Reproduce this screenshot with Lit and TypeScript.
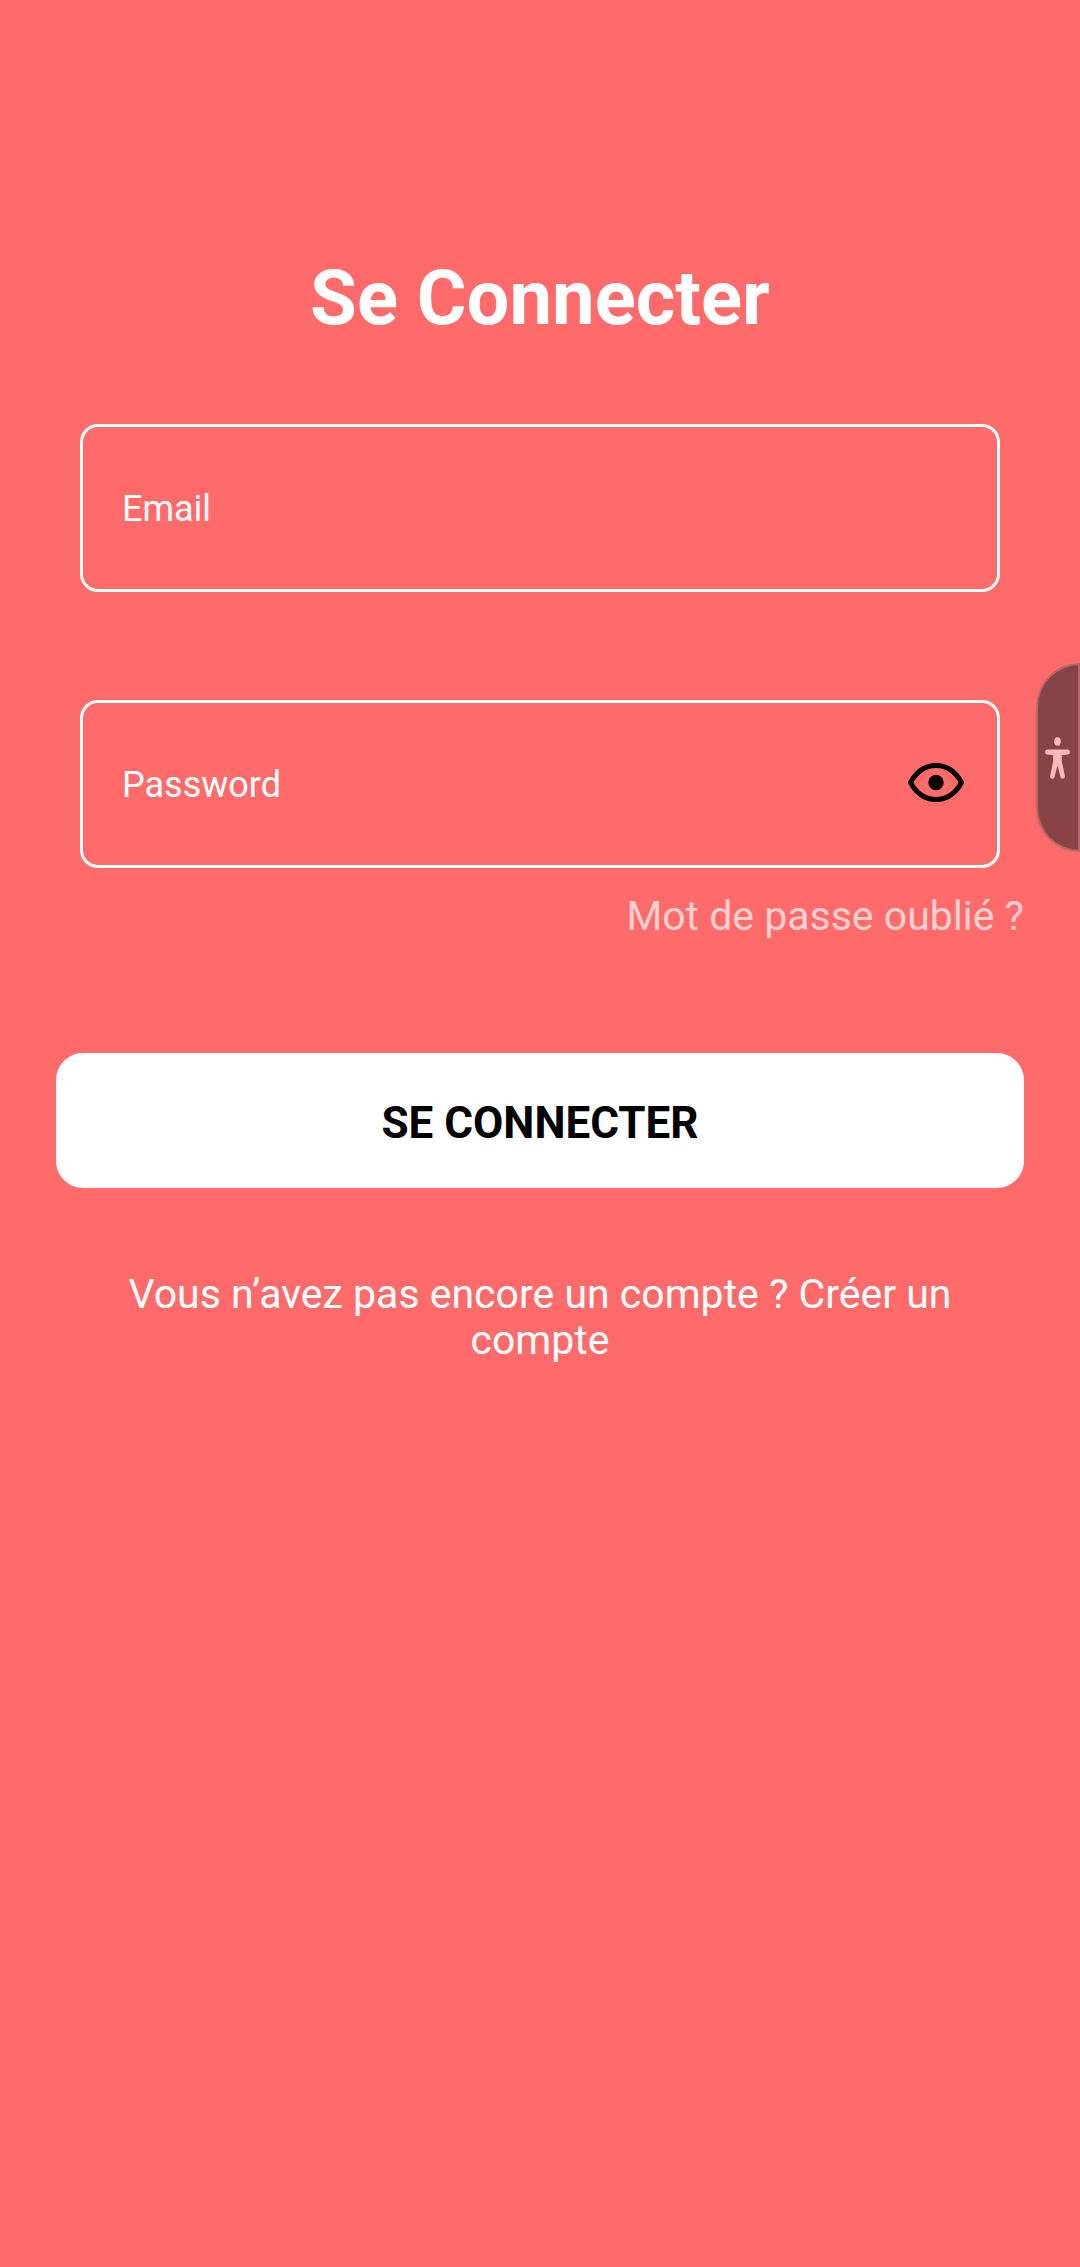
import { LitElement, html, css } from "lit";
import { customElement, state } from "lit/decorators.js";

@customElement("app-root")
export class AppRoot extends LitElement {
  @state() private revealed = false;

  static styles = css`
    :host {
      display: block;
      min-height: 100vh;
      background: #ff6b6b;
      color: #fff;
      font-family: Roboto, "Liberation Sans", sans-serif;
    }
    * {
      box-sizing: border-box;
    }
    .page {
      display: flex;
      flex-direction: column;
      padding: 252px 56px 56px;
    }
    .title {
      margin: 0 0 80px;
      font-size: 76px;
      line-height: 92px;
      font-weight: 700;
      text-align: center;
    }
    .form {
      display: flex;
      flex-direction: column;
    }
    .fields {
      display: flex;
      flex-direction: column;
      gap: 108px;
      padding: 0 24px;
    }
    .field {
      display: flex;
      align-items: center;
      height: 168px;
      padding: 0 32px 0 39px;
      border: 3px solid #fff;
      border-radius: 18px;
    }
    .input {
      flex: 1;
      min-width: 0;
      height: 100%;
      padding: 2px 0 0;
      border: 0;
      outline: 0;
      background: none;
      color: #fff;
      font-family: inherit;
      font-size: 36px;
    }
    .input::placeholder {
      color: #fff;
      opacity: 1;
    }
    .reveal {
      display: flex;
      padding: 0;
      border: 0;
      background: none;
      color: #000;
      cursor: pointer;
    }
    .eye {
      display: block;
      width: 58px;
      height: 44px;
    }
    .forgot {
      align-self: flex-end;
      margin-top: 25px;
      font-size: 41px;
      line-height: 46px;
      color: #ffd0d0;
      text-decoration: none;
    }
    .submit {
      margin-top: 114px;
      padding: 44px 24px 39px;
      border: 0;
      border-radius: 27px;
      background: #fff;
      color: #000;
      font-family: inherit;
      font-size: 44px;
      line-height: 52px;
      font-weight: 700;
      text-transform: uppercase;
      cursor: pointer;
    }
    .signup {
      display: block;
      margin-top: 83px;
      padding: 0 24px;
      color: inherit;
      font-size: 41px;
      line-height: 46px;
      text-align: center;
      text-decoration: none;
    }
    .assist {
      position: absolute;
      top: 663px;
      right: 0;
      display: flex;
      align-items: center;
      justify-content: center;
      width: 44px;
      height: 189px;
      padding: 0;
      border: 2px solid #b96668;
      border-radius: 44px 0 0 44px;
      background: #874446;
      color: #ffb9b9;
      cursor: pointer;
    }
    .person {
      display: block;
      width: 26px;
      height: 42px;
    }
  `;

  render() {
    return html`
      <main class="page">
        <h1 class="title">Se Connecter</h1>
        <form class="form" @submit=${(e: Event) => e.preventDefault()}>
          <div class="fields">
            <div class="field">
              <input class="input" type="email" aria-label="Email" placeholder="Email" />
            </div>
            <div class="field">
              <input
                class="input"
                type=${this.revealed ? "text" : "password"}
                aria-label="Password"
                placeholder="Password"
              />
              <button
                class="reveal"
                type="button"
                aria-label="Password"
                aria-pressed=${this.revealed ? "true" : "false"}
                @click=${() => (this.revealed = !this.revealed)}
              >
                <svg class="eye" viewBox="0 0 58 44" aria-hidden="true">
                  <path
                    d="M3.500 20.500C9 10.500 18 3.500 29 3.500s20 7 25.500 17C49 30.500 40 37.500 29 37.500S9 30.500 3.500 20.500Z"
                    fill="none"
                    stroke="currentColor"
                    stroke-width="5"
                    stroke-linejoin="round"
                  />
                  <circle cx="29" cy="20.500" r="7.700" fill="currentColor" />
                </svg>
              </button>
            </div>
          </div>
          <a class="forgot" href="#">Mot de passe oublié ?</a>
          <button class="submit" type="submit">Se connecter</button>
        </form>
        <a class="signup" href="#">Vous n’avez pas encore un compte ? Créer un compte</a>
      </main>
      <button class="assist" type="button" aria-label="Accessibility">
        <svg class="person" viewBox="0 0 26 42" aria-hidden="true" fill="currentColor">
          <ellipse cx="12.500" cy="4.400" rx="3.300" ry="4.200" />
          <path
            d="M2.400 12.500h20.200a2.400 2.500 0 0 1 0 5l-5.800.7v6l3 14.600a2.200 2.200 0 0 1-4.300 1.200L12.500 28.500 9.500 40a2.200 2.200 0 0 1-4.300-1.200L8.200 24.200v-6l-5.800-.7a2.400 2.500 0 0 1 0-5Z"
          />
        </svg>
      </button>
    `;
  }
}
